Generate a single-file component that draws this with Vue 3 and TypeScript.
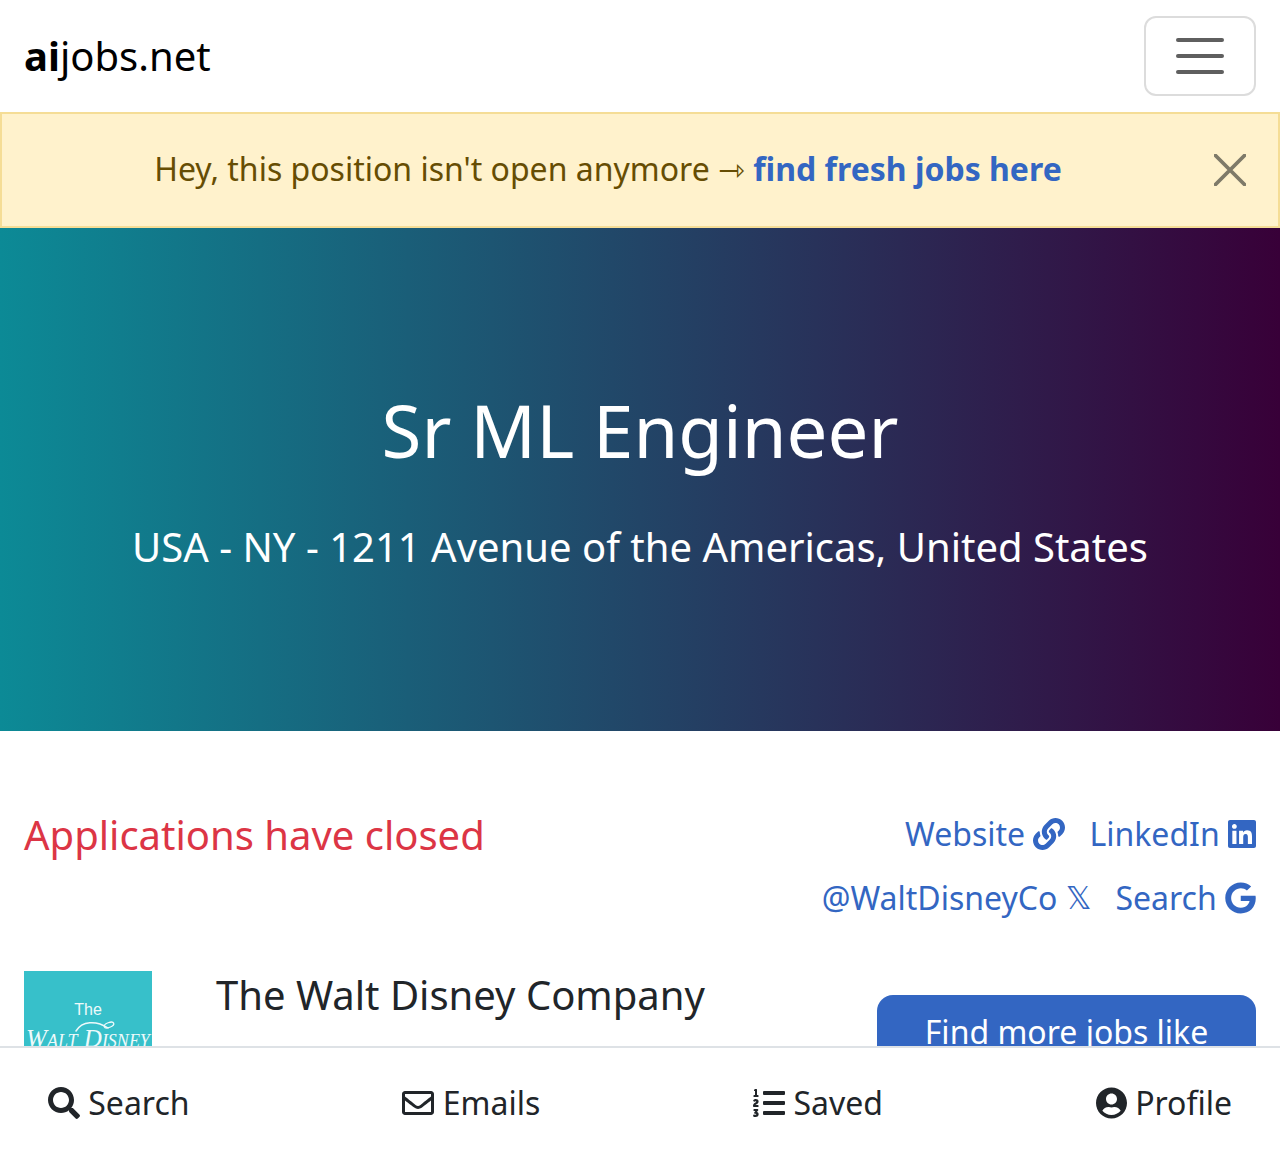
<script setup lang="ts">
interface NavItem {
  label: string
  viewBox: string
  width: number
  path: string
}

const navItems: NavItem[] = [
  {
    label: 'Search',
    viewBox: '0 0 512 512',
    width: 32,
    path: 'M505 442.7L405.3 343c-4.5-4.5-10.6-7-17-7H372c27.6-35.3 44-79.7 44-128C416 93.1 322.9 0 208 0S0 93.1 0 208s93.1 208 208 208c48.3 0 92.7-16.4 128-44v16.3c0 6.4 2.5 12.5 7 17l99.7 99.7c9.4 9.4 24.6 9.4 33.9 0l28.3-28.3c9.4-9.4 9.4-24.6.1-34zM208 336c-70.7 0-128-57.2-128-128 0-70.7 57.2-128 128-128 70.7 0 128 57.2 128 128 0 70.7-57.2 128-128 128z',
  },
  {
    label: 'Emails',
    viewBox: '0 0 512 512',
    width: 32,
    path: 'M464 64H48C21.49 64 0 85.49 0 112v288c0 26.51 21.49 48 48 48h416c26.51 0 48-21.49 48-48V112c0-26.51-21.49-48-48-48zm0 48v40.805c-22.422 18.259-58.168 46.651-134.587 106.49-16.841 13.247-50.201 45.072-73.413 44.701-23.208.375-56.579-31.459-73.413-44.701C106.18 199.465 70.425 171.067 48 152.805V112h416zM48 400V214.398c22.914 18.251 55.409 43.862 104.938 82.646 21.857 17.205 60.134 55.186 103.062 54.955 42.717.231 80.509-37.199 103.053-54.947 49.528-38.783 82.032-64.401 104.947-82.653V400H48z',
  },
  {
    label: 'Saved',
    viewBox: '0 0 512 512',
    width: 32,
    path: 'M61.77 401l17.5-20.15a19.92 19.92 0 0 0 5.07-14.19v-3.31C84.34 356 80.5 352 73 352H16a8 8 0 0 0-8 8v16a8 8 0 0 0 8 8h22.83a157.41 157.41 0 0 0-11 12.31l-5.61 7c-4 5.07-5.25 10.13-2.8 14.88l1.05 1.93c3 5.76 6.29 7.88 12.25 7.88h4.73c10.33 0 15.94 2.44 15.94 9.09 0 4.72-4.2 8.22-14.36 8.22a41.54 41.54 0 0 1-15.47-3.12c-6.49-3.88-11.74-3.5-15.6 3.12l-5.59 9.31c-3.72 6.13-3.19 11.72 2.63 15.94 7.71 4.69 20.38 9.44 37 9.44 34.16 0 48.5-22.75 48.5-44.12-.03-14.38-9.12-29.76-28.73-34.88zM496 224H176a16 16 0 0 0-16 16v32a16 16 0 0 0 16 16h320a16 16 0 0 0 16-16v-32a16 16 0 0 0-16-16zm0-160H176a16 16 0 0 0-16 16v32a16 16 0 0 0 16 16h320a16 16 0 0 0 16-16V80a16 16 0 0 0-16-16zm0 320H176a16 16 0 0 0-16 16v32a16 16 0 0 0 16 16h320a16 16 0 0 0 16-16v-32a16 16 0 0 0-16-16zM16 160h64a8 8 0 0 0 8-8v-16a8 8 0 0 0-8-8H64V40a8 8 0 0 0-8-8H32a8 8 0 0 0-7.14 4.42l-8 16A8 8 0 0 0 24 64h8v64H16a8 8 0 0 0-8 8v16a8 8 0 0 0 8 8zm-3.91 160H80a8 8 0 0 0 8-8v-16a8 8 0 0 0-8-8H41.32c3.29-10.29 48.34-18.68 48.34-56.44 0-29.06-25-39.56-44.47-39.56-21.36 0-33.8 10-40.46 18.75-4.37 5.59-3 10.84 2.8 15.37l8.58 6.88c5.61 4.56 11 2.47 16.12-2.44a13.44 13.44 0 0 1 9.46-3.84c3.33 0 9.28 1.56 9.28 8.75C51 248.19 0 257.31 0 304.59v4C0 316 5.08 320 12.09 320z',
  },
  {
    label: 'Profile',
    viewBox: '0 0 496 512',
    width: 31,
    path: 'M248 8C111 8 0 119 0 256s111 248 248 248 248-111 248-248S385 8 248 8zm0 96c48.6 0 88 39.4 88 88s-39.4 88-88 88-88-39.4-88-88 39.4-88 88-88zm0 344c-58.7 0-111.3-26.6-146.5-68.2 18.8-35.4 55.6-59.8 98.5-59.8 2.4 0 4.8.4 7.1 1.1 13 4.2 26.6 6.9 40.9 6.9 14.3 0 28-2.7 40.9-6.9 2.3-.7 4.7-1.1 7.1-1.1 42.9 0 79.7 24.4 98.5 59.8C359.3 421.4 306.7 448 248 448z',
  },
]
</script>

<template>
  <div class="page">
    <header class="navbar">
      <a class="brand"><b>ai</b>jobs.net</a>
      <button class="toggler" aria-label="Menu">
        <span></span><span></span><span></span>
      </button>
    </header>

    <div class="alert">
      <p class="alert-text">Hey, this position isn't open anymore ⇾ <a class="alert-link">find fresh jobs here</a></p>
      <button class="close" aria-label="Close">
        <svg viewBox="0 0 32 32" width="32" height="32">
          <path d="M1.5 1.5L30.5 30.5M30.5 1.5L1.5 30.5" fill="none" stroke="#7e7a68" stroke-width="3.8" stroke-linecap="round" />
        </svg>
      </button>
    </div>

    <section class="hero">
      <h1>Sr ML Engineer</h1>
      <p>USA - NY - 1211 Avenue of the Americas, United States</p>
    </section>

    <main class="content">
      <div class="top-row">
        <h2 class="closed">Applications have closed</h2>
        <div class="links">
          <div class="link-row">
            <a>Website
              <svg viewBox="0 0 512 512" width="32" height="32"><path d="M326.612 185.391c59.747 59.809 58.927 155.698.36 214.59-.11.12-.24.25-.36.37l-67.2 67.2c-59.27 59.27-155.699 59.262-214.96 0-59.27-59.26-59.27-155.7 0-214.96l37.106-37.106c9.84-9.84 26.786-3.3 27.294 10.606.648 17.722 3.826 35.527 9.69 52.721 1.986 5.822.567 12.262-3.783 16.612l-13.087 13.087c-28.026 28.026-28.905 73.66-1.155 101.96 28.024 28.579 74.086 28.749 102.325.51l67.2-67.19c28.191-28.191 28.073-73.757 0-101.83-3.701-3.694-7.429-6.564-10.341-8.569a16.037 16.037 0 0 1-6.947-12.606c-.396-10.567 3.348-21.456 11.698-29.806l21.054-21.055c5.521-5.521 14.182-6.199 20.584-1.731a152.482 152.482 0 0 1 20.522 17.197zM467.547 44.449c-59.261-59.262-155.69-59.27-214.96 0l-67.2 67.2c-.12.12-.25.25-.36.37-58.566 58.892-59.387 154.781.36 214.59a152.454 152.454 0 0 0 20.521 17.196c6.402 4.468 15.064 3.789 20.584-1.731l21.054-21.055c8.35-8.35 12.094-19.239 11.698-29.806a16.037 16.037 0 0 0-6.947-12.606c-2.912-2.005-6.64-4.875-10.341-8.569-28.073-28.073-28.191-73.639 0-101.83l67.2-67.19c28.239-28.239 74.3-28.069 102.325.51 27.75 28.3 26.872 73.934-1.155 101.96l-13.087 13.087c-4.35 4.35-5.769 10.79-3.783 16.612 5.864 17.194 9.042 34.999 9.69 52.721.509 13.906 17.454 20.446 27.294 10.606l37.106-37.106c59.271-59.259 59.271-155.699.001-214.959z" /></svg>
            </a>
            <a>LinkedIn
              <svg viewBox="0 0 448 512" width="28" height="32"><path d="M416 32H31.9C14.3 32 0 46.5 0 64.3v383.4C0 465.5 14.3 480 31.9 480H416c17.6 0 32-14.5 32-32.3V64.3c0-17.8-14.4-32.3-32-32.3zM135.4 416H69V202.2h66.5V416zm-33.2-243c-21.3 0-38.5-17.3-38.5-38.5S80.9 96 102.2 96c21.2 0 38.5 17.3 38.5 38.5 0 21.3-17.2 38.5-38.5 38.5zm282.1 243h-66.4V312c0-24.8-.5-56.7-34.5-56.7-34.6 0-39.9 27-39.9 54.9V416h-66.4V202.2h63.7v29.2h.9c8.9-16.8 30.6-34.5 62.9-34.5 67.2 0 79.7 44.3 79.7 101.9V416z" /></svg>
            </a>
          </div>
          <div class="link-row">
            <a>@WaltDisneyCo <span class="x-glyph">𝕏</span></a>
            <a>Search
              <svg viewBox="0 0 488 512" width="31" height="32"><path d="M488 261.8C488 403.3 391.1 504 248 504 110.8 504 0 393.2 0 256S110.8 8 248 8c66.8 0 123 24.5 166.3 64.9l-67.5 64.9C258.5 52.6 94.3 116.6 94.3 256c0 86.5 69.1 156.6 153.7 156.6 98.2 0 135-70.4 140.8-106.9H248v-85.3h236.1c2.3 12.7 3.9 24.9 3.9 41.4z" /></svg>
            </a>
          </div>
        </div>
      </div>

      <div class="company-row">
        <div class="logo">
          <span class="logo-the">The</span>
          <span class="logo-name">Walt Disney</span>
          <svg class="logo-flourish" viewBox="0 0 128 30" width="128" height="30">
            <path d="M52 14C58 4 72 3 84 11" fill="none" stroke="#eefafb" stroke-width="1.5" stroke-linecap="round" />
            <ellipse cx="85" cy="8" rx="5" ry="2.4" transform="rotate(-20 85 8)" fill="none" stroke="#eefafb" stroke-width="1.3" />
          </svg>
        </div>
        <div class="company-info">
          <h3>The Walt Disney Company</h3>
          <p>The mission of The Walt Disney Company</p>
        </div>
        <a class="find-btn">Find more jobs like this</a>
      </div>
    </main>

    <nav class="bottom-nav">
      <a v-for="item in navItems" :key="item.label" class="nav-item">
        <svg :viewBox="item.viewBox" :width="item.width" height="32"><path :d="item.path" /></svg>
        {{ item.label }}
      </a>
    </nav>
  </div>
</template>

<style scoped>
.page {
  height: 1160px;
  overflow: hidden;
  font-family: "Noto Sans", sans-serif;
  font-size: 32px;
  line-height: 48px;
  color: #212529;
  background: #fff;
}

.navbar {
  height: 112px;
  box-sizing: border-box;
  padding: 16px 24px;
  display: flex;
  align-items: center;
  justify-content: space-between;
}

.brand {
  font-size: 40px;
  color: #000;
}

.toggler {
  width: 112px;
  height: 80px;
  box-sizing: border-box;
  border: 2px solid #dcdcdc;
  border-radius: 12px;
  background: #fff;
  display: flex;
  flex-direction: column;
  align-items: center;
  justify-content: center;
  gap: 12px;
  padding: 0;
}

.toggler span {
  width: 48px;
  height: 4px;
  border-radius: 2px;
  background: #5f5f5f;
}

.alert {
  box-sizing: border-box;
  height: 116px;
  border: 2px solid #f5dd96;
  background: #fff2cc;
  color: #664d03;
  padding: 31px 96px 33px 32px;
  position: relative;
  text-align: center;
}

.alert-text {
  margin: 0;
}

.alert-link {
  color: #3366c2;
  font-weight: 700;
}

.close {
  position: absolute;
  top: 38px;
  right: 32px;
  width: 32px;
  height: 36px;
  padding: 0;
  border: 0;
  background: none;
  display: flex;
  align-items: center;
}

.hero {
  height: 503px;
  box-sizing: border-box;
  background: linear-gradient(90deg, #0c8a96, #380038);
  color: #fff;
  text-align: center;
  display: flex;
  flex-direction: column;
  align-items: center;
  justify-content: center;
  padding: 4px 24px 0;
}

.hero h1 {
  margin: 0 0 44px;
  font-size: 72.6px;
  line-height: 86px;
  font-weight: 400;
}

.hero p {
  margin: 0;
  font-size: 40px;
  line-height: 60px;
}

.content {
  padding: 72px 24px 0;
}

.top-row {
  display: flex;
  justify-content: space-between;
  align-items: flex-start;
}

.closed {
  margin: 0;
  font-size: 40px;
  line-height: 64px;
  font-weight: 400;
  color: #dc3545;
}

.links {
  display: flex;
  flex-direction: column;
  align-items: flex-end;
  margin-top: -1px;
}

.link-row {
  display: flex;
  gap: 24px;
  height: 64px;
  align-items: center;
  color: #3366c2;
}

.link-row a {
  display: inline-flex;
  align-items: center;
  gap: 8.3px;
}

.link-row svg {
  fill: currentColor;
}

.x-glyph {
  font-family: "DejaVu Sans", sans-serif;
}

.company-row {
  margin-top: 41px;
  display: flex;
  align-items: flex-start;
}

.logo {
  position: relative;
  width: 128px;
  height: 128px;
  flex: none;
  background: #37c0ca;
  color: #eefafb;
  display: flex;
  flex-direction: column;
  align-items: center;
  padding-top: 29px;
  box-sizing: border-box;
  font-family: "Liberation Sans", sans-serif;
  overflow: hidden;
}

.logo-the {
  font-size: 16px;
  line-height: 20px;
}

.logo-name {
  margin-top: 4px;
  font-family: "Liberation Serif", serif;
  font-style: italic;
  font-size: 25px;
  line-height: 30px;
  font-variant: small-caps;
  white-space: nowrap;
}

.logo-flourish {
  position: absolute;
  left: 0;
  top: 46px;
}

.company-info {
  margin-left: 64px;
  flex: 1;
  min-width: 0;
}

.company-info h3 {
  margin: -1px 0 0;
  font-size: 40px;
  line-height: 50px;
  font-weight: 400;
}

.company-info p {
  margin: 16px 0 0;
  font-size: 32px;
  white-space: nowrap;
}

.find-btn {
  margin-top: 24px;
  flex: none;
  width: 379px;
  box-sizing: border-box;
  padding: 13px 24px;
  background: #3366c2;
  color: #fff;
  border-radius: 16px;
  text-align: center;
}

.bottom-nav {
  position: fixed;
  left: 0;
  right: 0;
  bottom: 0;
  height: 114px;
  box-sizing: border-box;
  border-top: 2px solid #dee2e6;
  background: #fff;
  padding: 0 48px 2px;
  display: flex;
  justify-content: space-between;
  align-items: center;
}

.nav-item {
  display: inline-flex;
  align-items: center;
  gap: 8.3px;
  color: #212529;
}

.nav-item svg {
  fill: #212529;
}
</style>

<style>
body {
  margin: 0;
}
</style>
